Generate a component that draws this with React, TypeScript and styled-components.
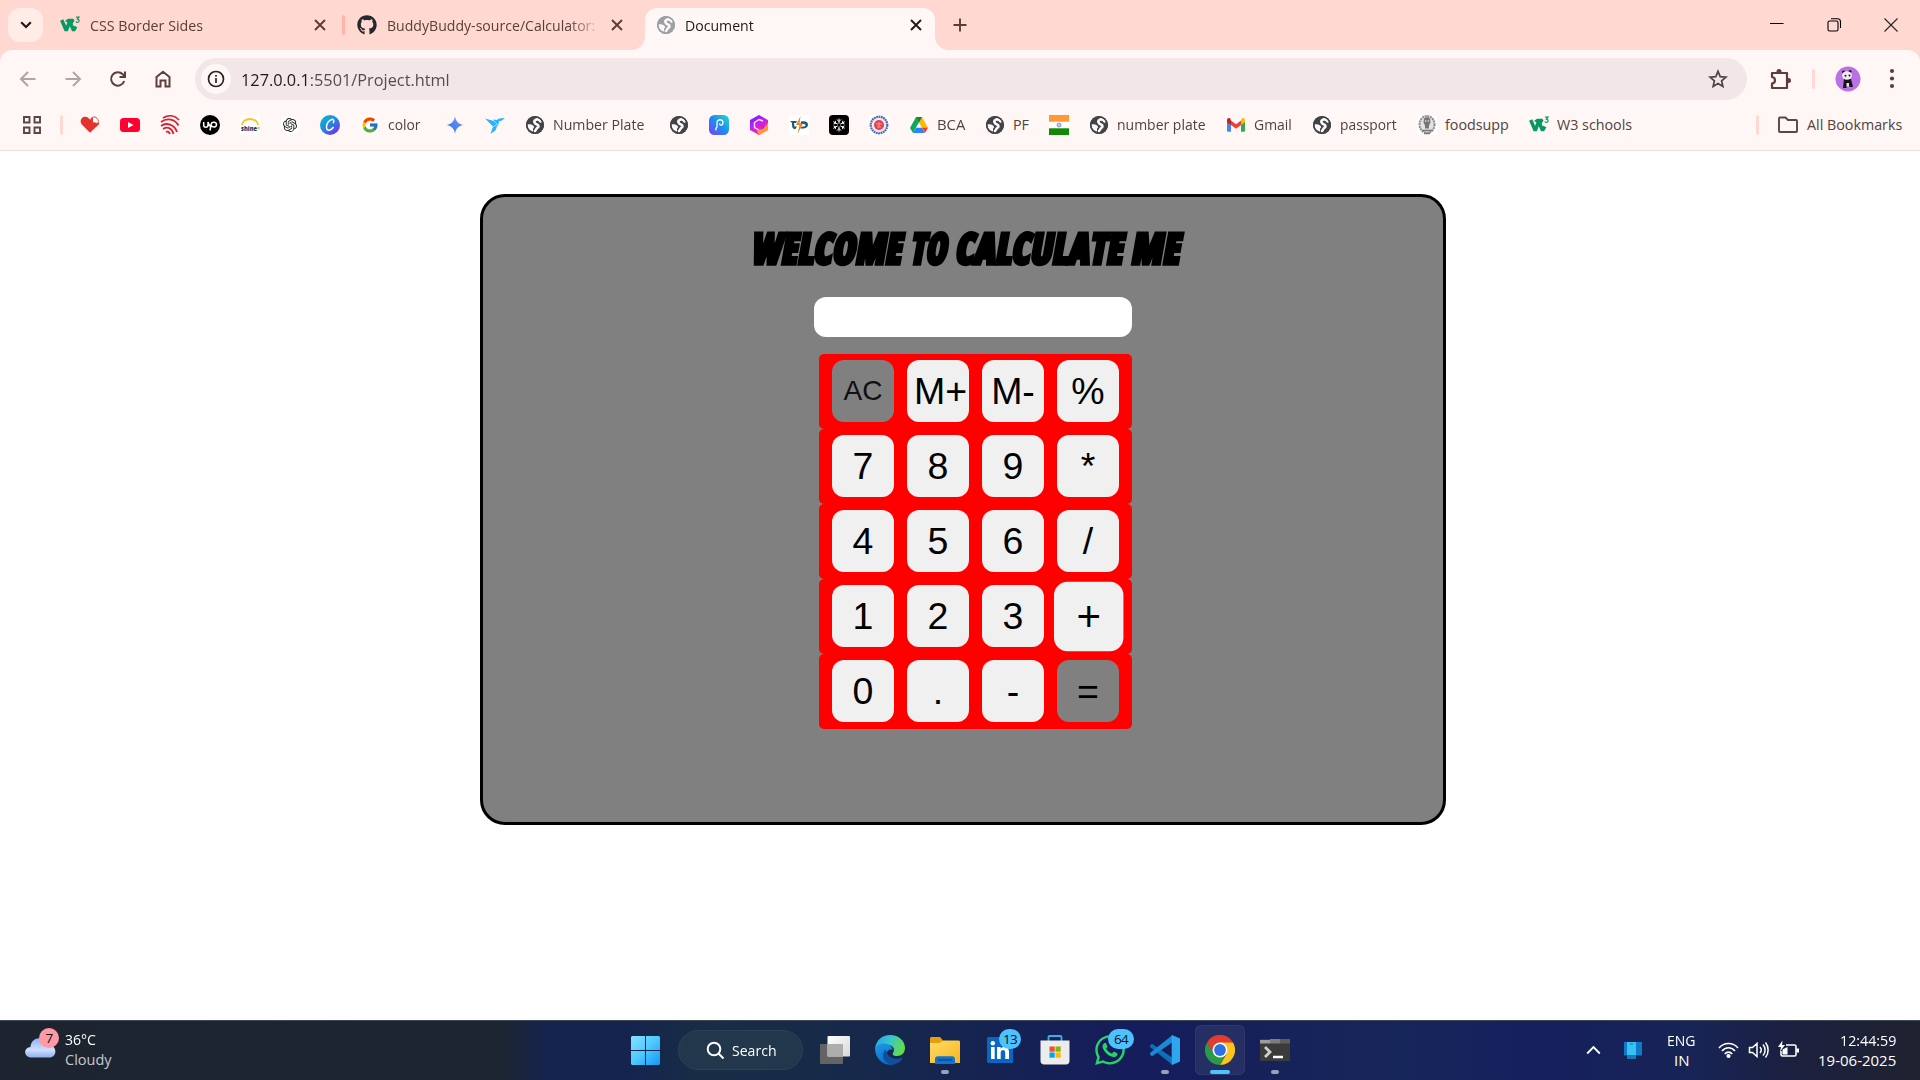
import React, { useLayoutEffect, useRef, useState } from "react";
import styled, { createGlobalStyle } from "styled-components";
import { FaGithub, FaWhatsapp } from "react-icons/fa";
import { FcGoogle } from "react-icons/fc";
import { SiOpenai } from "react-icons/si";

const Global = createGlobalStyle`
  * { box-sizing: border-box; }
  body { margin: 0; background: #fff; overflow: hidden; }
`;

const ui = `"Open Sans", "Noto Sans", sans-serif`;

/* ---------- text that is condensed to a given width ---------- */
const FitBox = styled.span<{ $w: number }>`
  display: block;
  width: ${(p) => p.$w}px;
  white-space: nowrap;
  flex: none;
`;
const FitInner = styled.span`
  display: inline-block;
  transform-origin: 0 50%;
`;
function Fit({ w, children }: { w: number; children: React.ReactNode }) {
  const ref = useRef<HTMLSpanElement>(null);
  const [scale, setScale] = useState(1);
  useLayoutEffect(() => {
    if (ref.current) setScale(w / ref.current.offsetWidth);
  }, [w]);
  return (
    <FitBox $w={w}>
      <FitInner ref={ref} style={{ transform: `scaleX(${scale})` }}>{children}</FitInner>
    </FitBox>
  );
}

/* ---------- layout shells ---------- */
const Screen = styled.div`
  width: 1920px;
  height: 1080px;
  display: flex;
  flex-direction: column;
  overflow: hidden;
  font-family: ${ui};
`;
const TabStrip = styled.div`
  height: 50px;
  flex: none;
  display: flex;
  align-items: flex-start;
  padding: 8px 0 0 8px;
  background: #ffd9d1;
  font-size: 14.5px;
  color: #5a3d37;
`;
const TabSearch = styled.div`
  width: 35px;
  height: 34px;
  border-radius: 12px;
  background: #ffece7;
  display: grid;
  place-items: center;
`;
const Tab = styled.div<{ $w: number; $ml: number; $active?: boolean }>`
  width: ${(p) => p.$w}px;
  height: 42px;
  margin-left: ${(p) => p.$ml}px;
  padding: 0 13px 8px 11px;
  display: flex;
  align-items: center;
  position: relative;
  border-radius: 12px 12px 0 0;
  background: ${(p) => (p.$active ? "#fff7f5" : "transparent")};
  color: ${(p) => (p.$active ? "#231917" : "#5a3d37")};
  ${(p) =>
    p.$active &&
    `&::before, &::after {
      content: ""; position: absolute; bottom: 0; width: 13px; height: 13px;
    }
    &::before { left: -13px; background: radial-gradient(circle at 0 0, transparent 12.5px, #fff7f5 13px); }
    &::after { right: -13px; background: radial-gradient(circle at 100% 0, transparent 12.5px, #fff7f5 13px); }`}
`;
const TabLabel = styled.div<{ $fade?: boolean; $gap?: number }>`
  flex: 1;
  padding: 2px 0 0 ${(p) => p.$gap ?? 10}px;
  line-height: 24px;
  ${(p) => p.$fade && `mask-image: linear-gradient(90deg, #000 87%, rgba(0, 0, 0, 0.15));`}
`;
const TabRule = styled.div`
  width: 3px;
  height: 20px;
  margin: 7px 0 0 3px;
  border-radius: 2px;
  background: #ffb5a6;
`;
const NewTab = styled.div`
  width: 20px;
  height: 34px;
  margin-left: 15px;
  display: grid;
  place-items: center;
`;
const WindowButtons = styled.div`
  margin-left: auto;
  height: 34px;
  display: flex;
  align-items: center;
  gap: 42.5px;
  padding-right: 22px;
`;
const ToolbarBack = styled.div`
  background: #ffd9d1;
  flex: none;
`;
const Toolbar = styled.div`
  height: 58px;
  display: flex;
  align-items: center;
  background: #fff7f5;
  border-radius: 12px 12px 0 0;
`;
const Nav = styled.div`
  width: 195px;
  display: flex;
  gap: 25px;
  padding: 0 0 1px 18px;
`;
const Omnibox = styled.div`
  width: 1552px;
  height: 42px;
  border-radius: 21px;
  background: #f2e6e8;
  display: flex;
  align-items: center;
  padding: 0 19px 0 6px;
  color: #5b4b49;
  font-size: 17px;
  b { color: #1f1a1b; font-weight: 400; }
`;
const InfoDisc = styled.div`
  width: 30px;
  height: 30px;
  margin-right: 10px;
  border-radius: 50%;
  background: #fff7f5;
  display: grid;
  place-items: center;
`;
const Spacer = styled.div`
  flex: 1;
`;
const LabelEnd = styled.div`
  flex: 0 0 14px;
`;
const ToolbarEnd = styled.div`
  flex: 1;
  display: flex;
  align-items: center;
  padding: 0 25px 0 22px;
`;
const Rule = styled.div<{ $ml: number; $mr: number }>`
  width: 3px;
  height: 20px;
  flex: none;
  margin: 0 ${(p) => p.$mr}px 0 ${(p) => p.$ml}px;
  border-radius: 2px;
  background: #ffd9d1;
`;
const Bookmarks = styled.div`
  height: 43px;
  flex: none;
  display: flex;
  align-items: center;
  padding: 0 18px 8px 22px;
  background: #fff7f5;
  border-bottom: 1px solid #f5dcd7;
  font-size: 14.3px;
  color: #51423f;
  line-height: 20px;
`;
const BookmarkList = styled.div`
  display: flex;
  gap: 20px;
`;
const Bookmark = styled.div`
  display: flex;
  align-items: center;
  gap: 8px;
  height: 20px;
  svg { flex: none; display: block; }
`;
const LabelBox = styled.div<{ $w: number }>`
  width: ${(p) => p.$w}px;
`;

/* ---------- page ---------- */
const Page = styled.div`
  height: 869px;
  flex: none;
  padding: 43px 0 0 480px;
  background: #fff;
`;
const Card = styled.div`
  width: 966px;
  height: 631px;
  border: 3px solid #000;
  border-radius: 25px;
  background: #808080;
  padding-top: 31px;
`;
const Title = styled.h1`
  margin: 0;
  height: 40px;
  padding-left: 270px;
  display: flex;
  gap: 8px;
  font: 900 43px/40px "Open Sans", sans-serif;
  font-stretch: 75%;
  color: #000;
  -webkit-text-stroke: 3.6px #000;
`;
const Slant = styled.span`
  display: block;
  transform: skewX(-10deg);
`;
const Display = styled.input`
  display: block;
  width: 318px;
  height: 40px;
  margin: 29px 0 17px 331px;
  border: 0;
  border-radius: 12px;
  background: #fff;
`;
const KeyRow = styled.div`
  width: 313px;
  height: 75px;
  margin-left: 336px;
  padding: 6px 13px 0;
  display: flex;
  gap: 13px;
  background: #f00;
  border-radius: 5px;
`;
const Key = styled.button<{ $gray?: boolean; $small?: boolean; $big?: boolean }>`
  width: 62px;
  height: 62px;
  flex: none;
  border: 0;
  border-radius: 12px;
  padding: 1px 7px;
  color: ${(p) => (p.$small ? "#111" : "#000")};
  background: ${(p) => (p.$gray ? "#808080" : "#f0f0f0")};
  font: ${(p) => (p.$small ? 28 : 37.5)}px "Liberation Sans", Arial, sans-serif;
  ${(p) => p.$big && `transform: translate(0.7px, 0.5px) scale(1.12);`}
`;

/* ---------- taskbar ---------- */
const Taskbar = styled.div`
  height: 60px;
  flex: none;
  display: flex;
  align-items: center;
  box-shadow: inset 0 1px #3c4856;
  background: linear-gradient(90deg, #1d2430 0, #1c2531 500px, #15234f 550px, #15244f 630px, #182d45 700px,
    #172b48 800px, #152450 960px, #151c5c 1140px, #16215a 1260px, #17265a 1380px, #15205e 1540px, #172454 1700px, #1c2040 1790px, #1f222f 1920px);
  color: #fff;
`;
const Weather = styled.div`
  width: 631px;
  display: flex;
  padding: 0 0 1px 25px;
  font-size: 14.5px;
  line-height: 20px;
`;
const WeatherIcon = styled.div`
  position: relative;
  width: 40px;
  height: 40px;
`;
const Count = styled.span<{ $w: number; $x: number; $y: number; $pink?: boolean }>`
  position: absolute;
  left: ${(p) => p.$x}px;
  top: ${(p) => p.$y}px;
  width: ${(p) => p.$w}px;
  height: 20px;
  border-radius: 10px;
  background: ${(p) => (p.$pink ? "#ff99a4" : "#4cc2ff")};
  color: #111;
  font-size: 13.5px;
  line-height: 20px;
  text-align: center;
  letter-spacing: -0.6px;
`;
const Muted = styled.div`
  color: #c6c9cf;
`;
const SearchPill = styled.div`
  width: 125px;
  height: 40px;
  margin: 0 7px 0 18px;
  border-radius: 20px;
  border: 1px solid #2c4256;
  background: #22374c;
  display: flex;
  align-items: center;
  gap: 7px;
  padding-left: 27px;
  font-size: 15px;
`;
const TaskApp = styled.div<{ $active?: boolean }>`
  position: relative;
  width: 50px;
  height: 50px;
  margin-right: 5px;
  border-radius: 6px;
  display: grid;
  place-items: center;
  ${(p) => p.$active && `background: #262f64; box-shadow: inset 0 0 0 1px #2f3869;`}
`;
const Pip = styled.i<{ $w: number; $c: string }>`
  position: absolute;
  left: ${(p) => 25 - p.$w / 2}px;
  bottom: 1px;
  width: ${(p) => p.$w}px;
  height: 4px;
  border-radius: 2px;
  background: ${(p) => p.$c};
`;
const Tray = styled.div`
  margin-left: auto;
  display: flex;
  align-items: center;
  padding: 0 24px 1px 0;
  font-size: 15px;
  line-height: 20px;
`;
const TrayText = styled.div<{ $ml: number; $end?: boolean }>`
  margin-left: ${(p) => p.$ml}px;
  display: flex;
  flex-direction: column;
  align-items: ${(p) => (p.$end ? "flex-end" : "center")};
`;
const TrayIcons = styled.div`
  display: flex;
  gap: 9px;
  margin-left: 22px;
`;
const PhoneSlot = styled.div`
  display: grid;
  margin-left: 23px;
`;

/* ---------- icons ---------- */
const W3 = () => (
  <svg width="20" height="20" viewBox="0 0 20 20">
    <path d="M1.700 5L6.200 15.500 9.700 6.500 13.600 15.500 15.800 11.500" fill="none" stroke="#059862" strokeWidth="3.500" strokeLinejoin="bevel" />
    <path d="M5 6l3-2.200h5.500l1 2-2.700 4z" fill="#059862" />
    <path d="M16 2.200h2.900l-1.500 2c2.400.1 2.200 3.200 0 3.200-.8 0-1.300-.4-1.600-1" fill="none" stroke="#059862" strokeWidth="1.200" />
  </svg>
);
const Globe = ({ c = "#3f4549", bg = "#fff7f5" }) => (
  <svg width="20" height="20" viewBox="0 0 20 20">
    <circle cx="10" cy="10" r="9" fill={c} />
    <path d="M15.500 6.500c-1-2-3.500-2.500-5-1.700-2.500 1.500-.5 4 1.500 4.700 2.200.8 1.700 2.700.3 3.300-1 .5-.8 1.700-2.300 3.200" fill="none" stroke={bg} strokeWidth="2.600" strokeLinecap="round" />
    <path d="M2.500 9.200C5 9 8 9.500 9 11.500c.4 1-.5 1.700-1 2.300v2.700C4.500 15.700 2.500 13 2.500 9.200z" fill={bg} />
    <circle cx="10" cy="10" r="8.300" fill="none" stroke={c} strokeWidth="1.500" />
  </svg>
);
const X = ({ c = "#5a3d37" }) => (
  <svg width="12" height="12" viewBox="0 0 12 12"><path d="M1 1l10 10M11 1L1 11" stroke={c} strokeWidth="1.9" /></svg>
);
const line = { fill: "none", stroke: "#5a4039", strokeWidth: 2 } as const;

const Heart = () => (
  <svg width="20" height="20" viewBox="0 0 20 20">
    <path d="M10 17.800L1.600 9.200C-1.500 4.500 3.800-.5 8 2.600L10 4.800l2-2.700 7.500 6.700z" fill="#e5322d" />
    <path d="M12.500 2.300c3-1.500 7 2 5.500 6.200l-5.500-1z" fill="#fff" stroke="#e5322d" strokeWidth=".9" />
  </svg>
);
const YouTube = () => (
  <svg width="20" height="20" viewBox="0 0 20 20"><rect y="3" width="20" height="14" rx="3.500" fill="#ff0033" /><path d="M8 7l5.500 3L8 13z" fill="#fff" /></svg>
);
const Waves = () => (
  <svg width="20" height="20" viewBox="0 0 20 20" fill="none" stroke="#dc2032" strokeWidth="1.800">
    <path d="M3 3C9-.5 15 .5 19 5M1 7C7 2.500 15 4 18.500 10.500M1 11c6-4.500 14-.5 16 6M3 14c5-3 9-.5 10.500 5M6 17c2-1 3 0 4 2" />
  </svg>
);
const Up = () => (
  <svg width="20" height="20" viewBox="0 0 20 20">
    <circle cx="10" cy="10" r="10" fill="#000" />
    <path d="M3.700 7v3c0 3 4.300 3 4.300 0V7c.6 2 1.700 4 2.700 5M10 15.500L11.200 9c.6-2.500 5.300-2.300 5.300.6 0 3-4 3.300-5.300.8" fill="none" stroke="#fff" strokeWidth="1.500" />
  </svg>
);
const Shine = () => (
  <svg width="20" height="20" viewBox="0 0 20 20">
    <rect width="20" height="20" fill="#fff" />
    <path d="M2 10a8 6 0 0 1 16 0" fill="none" stroke="#fbc02b" strokeWidth="1.800" />
    <text x="1" y="15.500" fontFamily="Open Sans" fontWeight="800" fontSize="7.500" textLength="16" lengthAdjust="spacingAndGlyphs" fill="#20386e">shine</text>
    <circle cx="18.500" cy="13" r="1.300" fill="#fbc02b" />
  </svg>
);
const OpenAI = () => (
  <svg width="20" height="20" viewBox="0 0 20 20"><circle cx="10" cy="10" r="9.500" fill="#fff" /><SiOpenai x="3" y="3" size={14} color="#222" /></svg>
);
const Canva = () => (
  <svg width="20" height="20" viewBox="0 0 20 20">
    <defs><linearGradient id="cv" x1="0" y1="0" x2=".8" y2="1"><stop stopColor="#00c4cc" /><stop offset=".5" stopColor="#1f8be0" /><stop offset="1" stopColor="#7d2ae8" /></linearGradient></defs>
    <circle cx="10" cy="10" r="10" fill="url(#cv)" />
    <path d="M12.800 8c1.700-1 1.200-4-1-3.600C8.500 5 6 9.500 6.500 12.800c.5 3.500 4.500 3 7-.8" fill="none" stroke="#fff" strokeWidth="1.500" />
  </svg>
);
const Google = () => (
  <svg width="20" height="20" viewBox="0 0 20 20"><circle cx="10" cy="10" r="10" fill="#fff" /><FcGoogle x="1" y="1" size={18} /></svg>
);
const Gemini = () => (
  <svg width="20" height="20" viewBox="0 0 20 20">
    <defs><linearGradient id="gm" x1="0" y1="1" x2="1" y2="0"><stop stopColor="#217bfe" /><stop offset=".5" stopColor="#4e86ee" /><stop offset="1" stopColor="#ac87eb" /></linearGradient></defs>
    <path d="M10 1c.7 5.500 3.500 8.300 9 9-5.500.7-8.300 3.500-9 9-.7-5.500-3.500-8.300-9-9 5.500-.7 8.300-3.500 9-9z" fill="url(#gm)" />
  </svg>
);
const Bird = () => (
  <svg width="20" height="20" viewBox="0 0 20 20" fill="#29b2fe">
    <path d="M0 3.500l9 2.500 3.500 3.500-1.700 5.500L5.500 19 8 11.500z" />
    <path d="M8.500 4.500l3.500.5 2-1.500 6-.5-3 2.500-3 .8-1 5-3.500-4.500z" />
    <path d="M8 11.500l4.500-2M9 6l3.500 3.500" stroke="#fff7f5" strokeWidth=".5" />
  </svg>
);
const PIcon = () => (
  <svg width="20" height="20" viewBox="0 0 20 20">
    <defs><linearGradient id="pp" x1="0" y1="1" x2="1" y2="0"><stop stopColor="#7a3ff0" /><stop offset=".5" stopColor="#1f8bf5" /><stop offset="1" stopColor="#1fdcc8" /></linearGradient></defs>
    <rect width="20" height="20" rx="5.500" fill="url(#pp)" />
    <path d="M7 15.500c-.8-2 0-2.500 1-3.500M8 12.200V8c0-4.500 6-4 6-.4 0 3-3.500 3.300-3.500.9" fill="none" stroke="#fff" strokeWidth="1.300" />
  </svg>
);
const Hex = () => (
  <svg width="20" height="20" viewBox="0 0 20 20">
    <defs><linearGradient id="hx" x1="0" y1="0" x2=".5" y2="1"><stop stopColor="#5a1cff" /><stop offset=".5" stopColor="#c41ef5" /><stop offset="1" stopColor="#ff2f9a" /></linearGradient></defs>
    <path d="M10 0l9 5v10l-9 5-9-5V5z" fill="url(#hx)" />
    <path d="M19 8v7l-9 5-2-4 7-3z" fill="#ff9838" />
    <path d="M14 6L10 4.500 5.500 7.500v5l4.500 2.500" fill="none" stroke="#ffe9ff" strokeWidth="1.400" />
    <path d="M9 9.500h6v3.500l-3 1.500v-3H9z" fill="#e01fb0" />
  </svg>
);
const Bolt = () => (
  <svg width="20" height="20" viewBox="0 0 20 20">
    <rect width="20" height="20" fill="#fff" />
    <path d="M1 6h7l-1 2H5l.5 3.500L8 11.500 6.500 14C3.500 14 3 12.500 3 8zM12 6.500c5-.6 7 .6 7 3.300s-3 4.200-7.500 3.700l1-1.800c3 .2 4-.7 4-1.700s-2-1.300-5-.8z" fill="#1c5a78" />
    <path d="M11.500 1L7 10h3.500l-2 9L14 8.500h-3.500z" fill="#f58020" />
  </svg>
);
const Snow = () => (
  <svg width="20" height="20" viewBox="0 0 20 20">
    <rect width="20" height="20" rx="4" fill="#000" />
    <path d="M10 3.500v13M4.300 6.700l11.400 6.600M15.700 6.700L4.300 13.300M8 4.500l2 2 2-2M8 15.500l2-2 2 2M4.500 9l2.200-.8-.5-2.400M15.500 11l-2.200.8.5 2.400M15.500 9l-2.200-.8.5-2.400M4.500 11l2.200.8-.5 2.400" fill="none" stroke="#fff" strokeWidth="1" />
    <circle cx="10" cy="10" r="1.500" fill="#000" />
  </svg>
);
const Seal = () => (
  <svg width="20" height="20" viewBox="0 0 20 20">
    <rect width="20" height="20" fill="#fff" />
    <circle cx="10" cy="10" r="8.300" fill="#e8ebf8" stroke="#5266a8" strokeWidth="2.200" strokeDasharray="1.800 .6" />
    <circle cx="10" cy="10" r="5" fill="#e8404a" />
    <path d="M7 9h6M8 12h4M10 7v5" stroke="#f6a0a0" strokeWidth=".9" />
  </svg>
);
const Drive = () => (
  <svg width="20" height="20" viewBox="0 0 20 20">
    <path d="M7 2h6L7 12.500 4 18l-3-5z" fill="#0da960" />
    <path d="M7 2h6l6 11h-6z" fill="#ffba00" />
    <path d="M7 2h6l-3 5.500z" fill="#0c8643" />
    <path d="M7 12.800h6L15.700 18H4z" fill="#2684fc" />
    <path d="M13 12.800h6L16 18z" fill="#ea4335" />
  </svg>
);
const Flag = () => (
  <svg width="20" height="20" viewBox="0 0 20 20">
    <rect width="20" height="20" fill="#fff" /><rect width="20" height="6.700" fill="#ff9933" /><rect y="13.300" width="20" height="6.700" fill="#138808" />
    <circle cx="10" cy="10" r="2" fill="#c5c9ec" stroke="#7a82c6" strokeWidth=".8" />
  </svg>
);
const Gmail = () => (
  <svg width="20" height="20" viewBox="0 0 20 20">
    <path d="M1 5v10.500c0 .8.500 1.300 1.300 1.300H5V9z" fill="#4285f4" />
    <path d="M15 9v7.800h2.700c.8 0 1.300-.5 1.300-1.300V5z" fill="#34a853" />
    <path d="M15 5.500V10l4-3V5c0-1.800-2-2.500-3.200-1.500z" fill="#fbbc04" />
    <path d="M5 5.500V10l5 3.700 5-3.700V5.500l-5 3.800z" fill="#ea4335" />
    <path d="M1 5v2l4 3V5.500l-.8-2C3 2.500 1 3.200 1 5z" fill="#c5221f" />
  </svg>
);
const Emblem = () => (
  <svg width="20" height="20" viewBox="0 0 20 20">
    <rect width="20" height="20" fill="#fff" />
    <ellipse cx="10" cy="9.500" rx="7.500" ry="8.500" fill="#e3e3e3" stroke="#8c8c8c" strokeWidth="2" strokeDasharray="2 .7" />
    <path d="M7 3.500c2-2 4-2 6 0l.5 4-1.500 3v3h-4v-3l-1.500-3z" fill="#777" />
    <path d="M5 15.500h10M7 18.500h6" stroke="#777" strokeWidth="1.600" />
    <circle cx="8.700" cy="6" r=".8" fill="#eee" /><circle cx="11.300" cy="6" r=".8" fill="#eee" />
  </svg>
);

type BM = { icon: React.ReactNode; label?: string; w?: number; box?: number };
const bookmarks: BM[] = [
  { icon: <Heart /> }, { icon: <YouTube /> }, { icon: <Waves /> }, { icon: <Up /> }, { icon: <Shine /> },
  { icon: <OpenAI /> }, { icon: <Canva /> },
  { icon: <Google />, label: "color", w: 33, box: 37 },
  { icon: <Gemini /> }, { icon: <Bird /> },
  { icon: <Globe />, label: "Number Plate", w: 91, box: 96 },
  { icon: <Globe /> }, { icon: <PIcon /> }, { icon: <Hex /> }, { icon: <Bolt /> }, { icon: <Snow /> }, { icon: <Seal /> },
  { icon: <Drive />, label: "BCA", w: 28, box: 28 },
  { icon: <Globe />, label: "PF", w: 16, box: 16 },
  { icon: <Flag /> },
  { icon: <Globe />, label: "number plate", w: 89, box: 89 },
  { icon: <Gmail />, label: "Gmail", w: 38, box: 38 },
  { icon: <Globe />, label: "passport", w: 57, box: 57 },
  { icon: <Emblem />, label: "foodsupp", w: 64, box: 64 },
  { icon: <W3 />, label: "W3 schools", w: 75, box: 75 },
];

const keys = [
  ["AC", "M+", "M-", "%"],
  ["7", "8", "9", "*"],
  ["4", "5", "6", "/"],
  ["1", "2", "3", "+"],
  ["0", ".", "-", "="],
];
const titleWords: [string, number][] = [["WELCOME", 151], ["TO", 37], ["CALCULATE", 168], ["ME", 49]];

/* ---------- taskbar icons ---------- */
const Start = () => (
  <svg width="29" height="29" viewBox="0 0 29 29">
    <defs><linearGradient id="st" gradientUnits="userSpaceOnUse" x1="0" y1="0" x2="29" y2="29"><stop stopColor="#86e2ff" /><stop offset=".5" stopColor="#4cc9fd" /><stop offset="1" stopColor="#1496f5" /></linearGradient></defs>
    <path d="M1 0h13v14H0V1zM15 0h13l1 1v13H15zM0 15h14v14H1l-1-1zM15 15h14v13l-1 1H15z" fill="url(#st)" />
  </svg>
);
const TaskView = () => (
  <svg width="30" height="28" viewBox="0 0 30 28">
    <defs><linearGradient id="tv" x1="0" y1="0" x2="1" y2="1"><stop stopColor="#fff" /><stop offset="1" stopColor="#d8d8d8" /></linearGradient></defs>
    <rect y="8" width="23" height="20" rx="1" fill="#646464" />
    <rect x="7.500" width="22.500" height="20.500" rx="1" fill="url(#tv)" />
    <rect x="7.500" y="8" width="15.500" height="12.500" fill="#adadad" />
  </svg>
);
const Edge = () => (
  <svg width="30" height="30" viewBox="0 0 30 30">
    <defs>
      <linearGradient id="e1" x1="0" y1="0" x2="1" y2=".3"><stop stopColor="#2a9fe0" /><stop offset=".5" stopColor="#36c3d0" /><stop offset="1" stopColor="#62dc4f" /></linearGradient>
      <linearGradient id="e2" x1="0" y1="0" x2=".4" y2="1"><stop stopColor="#1d9be6" /><stop offset="1" stopColor="#0b6cc8" /></linearGradient>
    </defs>
    <path d="M0 14C1 5 7 0 15 0c9 0 15 6 15 13 0 5-3.500 8-8 8-4 0-5-1.600-4-3 2-2.500 1-8-5-8C7 9.500 1.500 11 0 14z" fill="url(#e1)" />
    <path d="M0 14c1-3.500 5-6 9.500-5.500 5 .3 8 3 8 6.500-3-1.500-6 1-6 5 0 4.500 4 9 8 9-8 3-19-3-19.500-15z" fill="url(#e2)" />
    <path d="M11 14.500c-3 2-4 6-2 10 2 3.500 6 5.800 10.500 4.800 4-1 6.500-3.300 8-6 .3-.6-.2-1-.8-.7C19 26 11.500 21.500 11 14.500z" fill="#104f9f" />
  </svg>
);
const Explorer = () => (
  <svg width="30" height="27" viewBox="0 0 30 27">
    <defs><linearGradient id="ex" x1="0" y1="0" x2="1" y2="1"><stop stopColor="#ffdc68" /><stop offset="1" stopColor="#f8b51c" /></linearGradient></defs>
    <path d="M0 1.500C0 .6.600 0 1.500 0H10l3 3.500V8H0z" fill="#e3a00c" />
    <path d="M0 6h9.500l3.500-2.500h15.500c.9 0 1.500.6 1.500 1.500V26H0z" fill="url(#ex)" />
    <path d="M5 27v-5c0-1.600 1.200-2.800 2.800-2.800h14.400c1.600 0 2.800 1.200 2.800 2.800v5z" fill="#1373cc" />
    <path d="M8 23h14" stroke="#0b4b94" strokeWidth="1.500" />
  </svg>
);
const LinkedIn = () => (
  <svg width="26" height="26" viewBox="0 0 26 26">
    <rect width="26" height="26" rx="1.500" fill="#0a66c2" />
    <circle cx="5.800" cy="6.300" r="2.200" fill="#fff" />
    <path d="M4 10h3.700v12H4zM10 10h3.600v1.700c1.800-3 8.400-3 8.400 3V22h-3.800v-6.300c0-3.600-4.500-3.300-4.500 0V22H10z" fill="#fff" />
  </svg>
);
const Store = () => (
  <svg width="30" height="30" viewBox="0 0 30 30">
    <path d="M8.500 7V2c0-.5.300-1 1-1h11c.6 0 1 .5 1 1v5" fill="none" stroke="#2fb4ee" strokeWidth="1.800" />
    <path d="M.5 5.500h29V26c0 2-1.400 3.500-3.500 3.500H4C2 29.500.5 28 .5 26z" fill="#ececec" />
    <path d="M9.500 11.500h5.200v5.200H9.500z" fill="#f25022" /><path d="M15.500 11.500h5.200v5.200h-5.200z" fill="#7fba00" />
    <path d="M9.500 17.500h5.200v5.200H9.500z" fill="#00a4ef" /><path d="M15.500 17.500h5.200v5.200h-5.200z" fill="#ffb900" />
  </svg>
);
const Code = () => (
  <svg width="30" height="30" viewBox="0 0 30 30">
    <path d="M0 10.500l2-1.800 20.500 14V30L0 12z" fill="#0d6fb8" />
    <path d="M0 19.500l2 1.800 20.500-14V0L0 18z" fill="#1a8ad4" />
    <path d="M22 0l8 3.500v23L22 30c-.5-.5-.3-1-.3-2V2c0-1-.2-1.500.3-2z" fill="#2da6ee" />
  </svg>
);
const Chrome = () => (
  <svg width="30" height="30" viewBox="0 0 30 30">
    <path d="M2 7.500A15 15 0 0 1 28 7.500L15 8.500 8.500 18.700z" fill="#e33b2e" />
    <path d="M28 7.500A15 15 0 0 1 15 30L21.500 18.700 15 7.500z" fill="#fcc31e" />
    <path d="M2 7.500A15 15 0 0 0 15 30l6.500-11.300h-13z" fill="#2a9a48" />
    <circle cx="15" cy="15" r="7.500" fill="#fff" /><circle cx="15" cy="15" r="5.900" fill="#2f6fe4" />
  </svg>
);
const Terminal = () => (
  <svg width="30" height="22" viewBox="0 0 30 22">
    <rect width="30" height="22" rx="1" fill="#3b3b3b" />
    <path d="M0 1h10v3.500H0z" fill="#9c9c9c" /><path d="M10 0h10v4.500H10z" fill="#7d7d7d" /><path d="M20 0h10v4.500H20z" fill="#5e5e5e" />
    <path d="M5 8l5 5-5 5" fill="none" stroke="#cfcfcf" strokeWidth="2.800" /><path d="M13 18h10" stroke="#fff" strokeWidth="2.500" />
  </svg>
);
const Cloud = () => (
  <svg width="31" height="40" viewBox="0 0 31 40">
    <defs><linearGradient id="cl" x1="0" y1="0" x2="0" y2="1"><stop stopColor="#8fb0f2" /><stop offset=".6" stopColor="#cfdffb" /><stop offset="1" stopColor="#8eaef0" /></linearGradient></defs>
    <path d="M6.500 27.500C-2 27-1.500 17.500 5.500 17 6 6 20 5.500 22.500 14.500 33 15 32.500 27.500 24 27.500z" fill="url(#cl)" />
  </svg>
);

export default function App() {
  return (
    <Screen>
      <Global />
      <TabStrip>
        <TabSearch>
          <svg width="12" height="8" viewBox="0 0 12 8"><path d="M1.200 1.200L6 6l4.800-4.800" fill="none" stroke="#231917" strokeWidth="2.200" /></svg>
        </TabSearch>
        <Tab $w={290} $ml={6}>
          <W3 />
          <TabLabel><Fit w={113}>CSS Border Sides</Fit></TabLabel>
          <X />
        </Tab>
        <TabRule />
        <Tab $w={290} $ml={1}>
          <FaGithub size={20} color="#24292f" />
          <TabLabel $fade><Fit w={208}>BuddyBuddy-source/Calculator:</Fit></TabLabel>
          <LabelEnd />
          <X />
        </Tab>
        <Tab $w={290} $ml={9} $active>
          <Globe c="#9aa0a6" />
          <TabLabel $gap={9}><Fit w={69}>Document</Fit></TabLabel>
          <X c="#231917" />
        </Tab>
        <NewTab>
          <svg width="14" height="14" viewBox="0 0 14 14"><path d="M7 .5v13M.5 7h13" stroke="#5a3d37" strokeWidth="1.900" /></svg>
        </NewTab>
        <WindowButtons>
          <svg width="14" height="14" viewBox="0 0 14 14"><path d="M0 5.500h13.500" stroke="#000" /></svg>
          <svg width="15" height="14" viewBox="0 0 15 14" fill="none" stroke="#000" strokeWidth="1.100">
            <rect x="1" y="3" width="10" height="10" rx="1.500" /><path d="M4 .8h6.500c1.800 0 3 1.200 3 3V10" />
          </svg>
          <svg width="14" height="14" viewBox="0 0 14 14"><path d="M.5.500l13 13M13.500.500l-13 13" stroke="#222" strokeWidth="1.100" /></svg>
        </WindowButtons>
      </TabStrip>

      <ToolbarBack>
        <Toolbar>
          <Nav>
            <svg width="20" height="20" viewBox="0 0 20 20" fill="none" stroke="#b3a5a2" strokeWidth="2"><path d="M17.500 10H3.500M10 3l-7 7 7 7" /></svg>
            <svg width="20" height="20" viewBox="0 0 20 20" fill="none" stroke="#b3a5a2" strokeWidth="2"><path d="M2.500 10h14M10 3l7 7-7 7" /></svg>
            <svg width="20" height="20" viewBox="0 0 20 20" {...line}><path d="M16.200 12a6.700 6.700 0 1 1-1.500-6.700L16.500 7M17 2.500V8h-5.500" /></svg>
            <svg width="20" height="20" viewBox="0 0 20 20" {...line}><path d="M3.500 8L10 2.800 16.500 8v9.500h-4v-6h-5v6h-4z" /></svg>
          </Nav>
          <Omnibox>
            <InfoDisc>
              <svg width="18" height="18" viewBox="0 0 18 18"><circle cx="9" cy="9" r="7.500" fill="none" stroke="#2b2322" strokeWidth="1.700" /><path d="M9 8v5M9 5v1.700" stroke="#2b2322" strokeWidth="1.700" /></svg>
            </InfoDisc>
            <Fit w={209}><b>127.0.0.1</b>:5501/Project.html</Fit>
            <Spacer />
            <svg width="20" height="20" viewBox="0 0 20 20" fill="none" stroke="#524340" strokeWidth="1.700"><path d="M10 2.300l2.200 5.300 5.800.5-4.400 3.800 1.300 5.600-4.900-3-4.900 3 1.300-5.600L2 8.100l5.800-.5z" /></svg>
          </Omnibox>
          <ToolbarEnd>
            <svg width="22" height="22" viewBox="0 0 22 22"><path d="M3 5h15v15H3v-4.500c4-.5 4-6 0-6.500z" fill="none" stroke="#5a4039" strokeWidth="2.200" strokeLinejoin="round" /><circle cx="10" cy="3.500" r="2.500" fill="#5a4039" /><circle cx="19.500" cy="12.500" r="2.500" fill="#5a4039" /></svg>
            <Rule $ml={21} $mr={20} />
            <svg width="26" height="26" viewBox="0 0 26 26">
              <circle cx="13" cy="13" r="12.500" fill="#b971e3" />
              <path d="M9 13h7l2 8h-3.500l-1-4h-1l-1 5H8z" fill="#17131c" />
              <circle cx="8.500" cy="6" r="1.500" fill="#17131c" /><circle cx="15" cy="5.500" r="1.500" fill="#17131c" />
              <ellipse cx="12" cy="9.500" rx="5" ry="4.200" fill="#f1ecf3" />
              <circle cx="10.500" cy="9.800" r="1" fill="#17131c" /><circle cx="14.500" cy="9.500" r="1" fill="#17131c" /><path d="M11.500 17h2.500v3.500h-2.500z" fill="#e9e2ee" />
            </svg>
            <Spacer />
            <svg width="6" height="22" viewBox="0 0 6 22" fill="#5a4039"><circle cx="3" cy="3" r="2.100" /><circle cx="3" cy="10.500" r="2.100" /><circle cx="3" cy="18" r="2.100" /></svg>
          </ToolbarEnd>
        </Toolbar>
      </ToolbarBack>

      <Bookmarks>
        <svg width="20" height="20" viewBox="0 0 20 20" fill="none" stroke="#5a4644" strokeWidth="1.900"><path d="M2 2h5.500v5.500H2zM12.500 2H18v5.500h-5.500zM2 12.500h5.500V18H2zM12.500 12.500H18V18h-5.500z" /></svg>
        <Rule $ml={18} $mr={17} />
        <BookmarkList>
          {bookmarks.map((b, i) => (
            <Bookmark key={i}>
              {b.icon}
              {b.label && <LabelBox $w={b.box!}><Fit w={b.w!}>{b.label}</Fit></LabelBox>}
            </Bookmark>
          ))}
        </BookmarkList>
        <Spacer />
        <Rule $ml={0} $mr={18} />
        <Bookmark>
          <svg width="22" height="20" viewBox="0 0 22 20" fill="none" stroke="#5a4644" strokeWidth="1.900"><path d="M2 3.500c0-.6.400-1 1-1h5.500L11 5h8c.6 0 1 .4 1 1v10c0 .6-.4 1-1 1H3c-.6 0-1-.4-1-1z" /></svg>
          <Fit w={95}>All Bookmarks</Fit>
        </Bookmark>
      </Bookmarks>

      <Page>
        <Card>
          <Title>
            {titleWords.map(([t, w]) => (
              <Slant key={t}><Fit w={w}>{t}</Fit></Slant>
            ))}
          </Title>
          <Display readOnly />
          {keys.map((row) => (
            <KeyRow key={row[0]}>
              {row.map((k) => (
                <Key key={k} $gray={k === "AC" || k === "="} $small={k === "AC"} $big={k === "+"}>{k}</Key>
              ))}
            </KeyRow>
          ))}
        </Card>
      </Page>

      <Taskbar>
        <Weather>
          <WeatherIcon><Cloud /><Count $w={20} $x={14} $y={-2} $pink>7</Count></WeatherIcon>
          <div>
            <Fit w={31}>36°C</Fit>
            <Muted><Fit w={47}>Cloudy</Fit></Muted>
          </div>
        </Weather>
        <Start />
        <SearchPill>
          <svg width="19" height="19" viewBox="0 0 19 19" fill="none" stroke="#fff" strokeWidth="2"><circle cx="8" cy="8" r="6.300" /><path d="M12.500 12.500l5 5" /></svg>
          <Fit w={45}>Search</Fit>
        </SearchPill>
        <TaskApp><TaskView /></TaskApp>
        <TaskApp><Edge /></TaskApp>
        <TaskApp><Explorer /><Pip $w={8} $c="#9aa0bd" /></TaskApp>
        <TaskApp><LinkedIn /><Count $w={22} $x={24} $y={4}>13</Count></TaskApp>
        <TaskApp><Store /></TaskApp>
        <TaskApp><FaWhatsapp size={34} color="#25d366" /><Count $w={26} $x={23} $y={4}>64</Count></TaskApp>
        <TaskApp><Code /><Pip $w={8} $c="#9aa0bd" /></TaskApp>
        <TaskApp $active><Chrome /><Pip $w={20} $c="#4cc2ff" /></TaskApp>
        <TaskApp><Terminal /><Pip $w={8} $c="#9aa0bd" /></TaskApp>
        <Tray>
          <svg width="15" height="10" viewBox="0 0 15 10"><path d="M1.200 8.500l6.300-6.300 6.300 6.300" fill="none" stroke="#fff" strokeWidth="1.900" /></svg>
          <PhoneSlot>
            <svg width="18" height="18" viewBox="0 0 18 18"><path d="M0 1h18v13.500H0z" fill="#0f7ac6" /><path d="M3 1h9v16.500H3z" fill="#37c0f2" /><path d="M3 14h9v3.500H3z" fill="#1479bb" /><path d="M6 3h3" stroke="#1479bb" /></svg>
          </PhoneSlot>
          <TrayText $ml={25}><Fit w={29}>ENG</Fit><Fit w={15}>IN</Fit></TrayText>
          <TrayIcons>
            <svg width="21" height="20" viewBox="0 0 21 20" fill="none" stroke="#fff" strokeWidth="1.600"><path d="M1 8c5-6 14-6 19 0M4 11c3.500-4.300 9.500-4.300 13 0M6.800 14c2-2.500 5.400-2.500 7.400 0" /><circle cx="10.500" cy="16" r="1.300" fill="#fff" /></svg>
            <svg width="21" height="20" viewBox="0 0 21 20" fill="none" stroke="#fff" strokeWidth="1.500"><path d="M1.500 7.500h3l4.500-4v13l-4.500-4h-3zM12 7c1.500 1.800 1.500 4.200 0 6M15 4.500c2.800 3.200 2.800 7.800 0 11M17.500 2.500c3.500 4.200 3.500 10.800 0 15" /></svg>
            <svg width="21" height="20" viewBox="0 0 21 20"><path d="M8 5h8.500c1 0 1.500.6 1.500 1.500v8c0 1-.6 1.500-1.500 1.500h-12c-1 0-1.500-.6-1.500-1.500V11" fill="none" stroke="#fff" strokeWidth="1.600" /><path d="M18.500 8.500H21v4h-2.500zM4.500 9.500L9.500 7v7.500h-5z" fill="#fff" /><path d="M4.500.500L0 7h3l-1 4.500L7 5H4z" fill="#fff" /></svg>
          </TrayIcons>
          <TrayText $ml={19} $end><Fit w={56}>12:44:59</Fit><Fit w={78}>19-06-2025</Fit></TrayText>
        </Tray>
      </Taskbar>
    </Screen>
  );
}
